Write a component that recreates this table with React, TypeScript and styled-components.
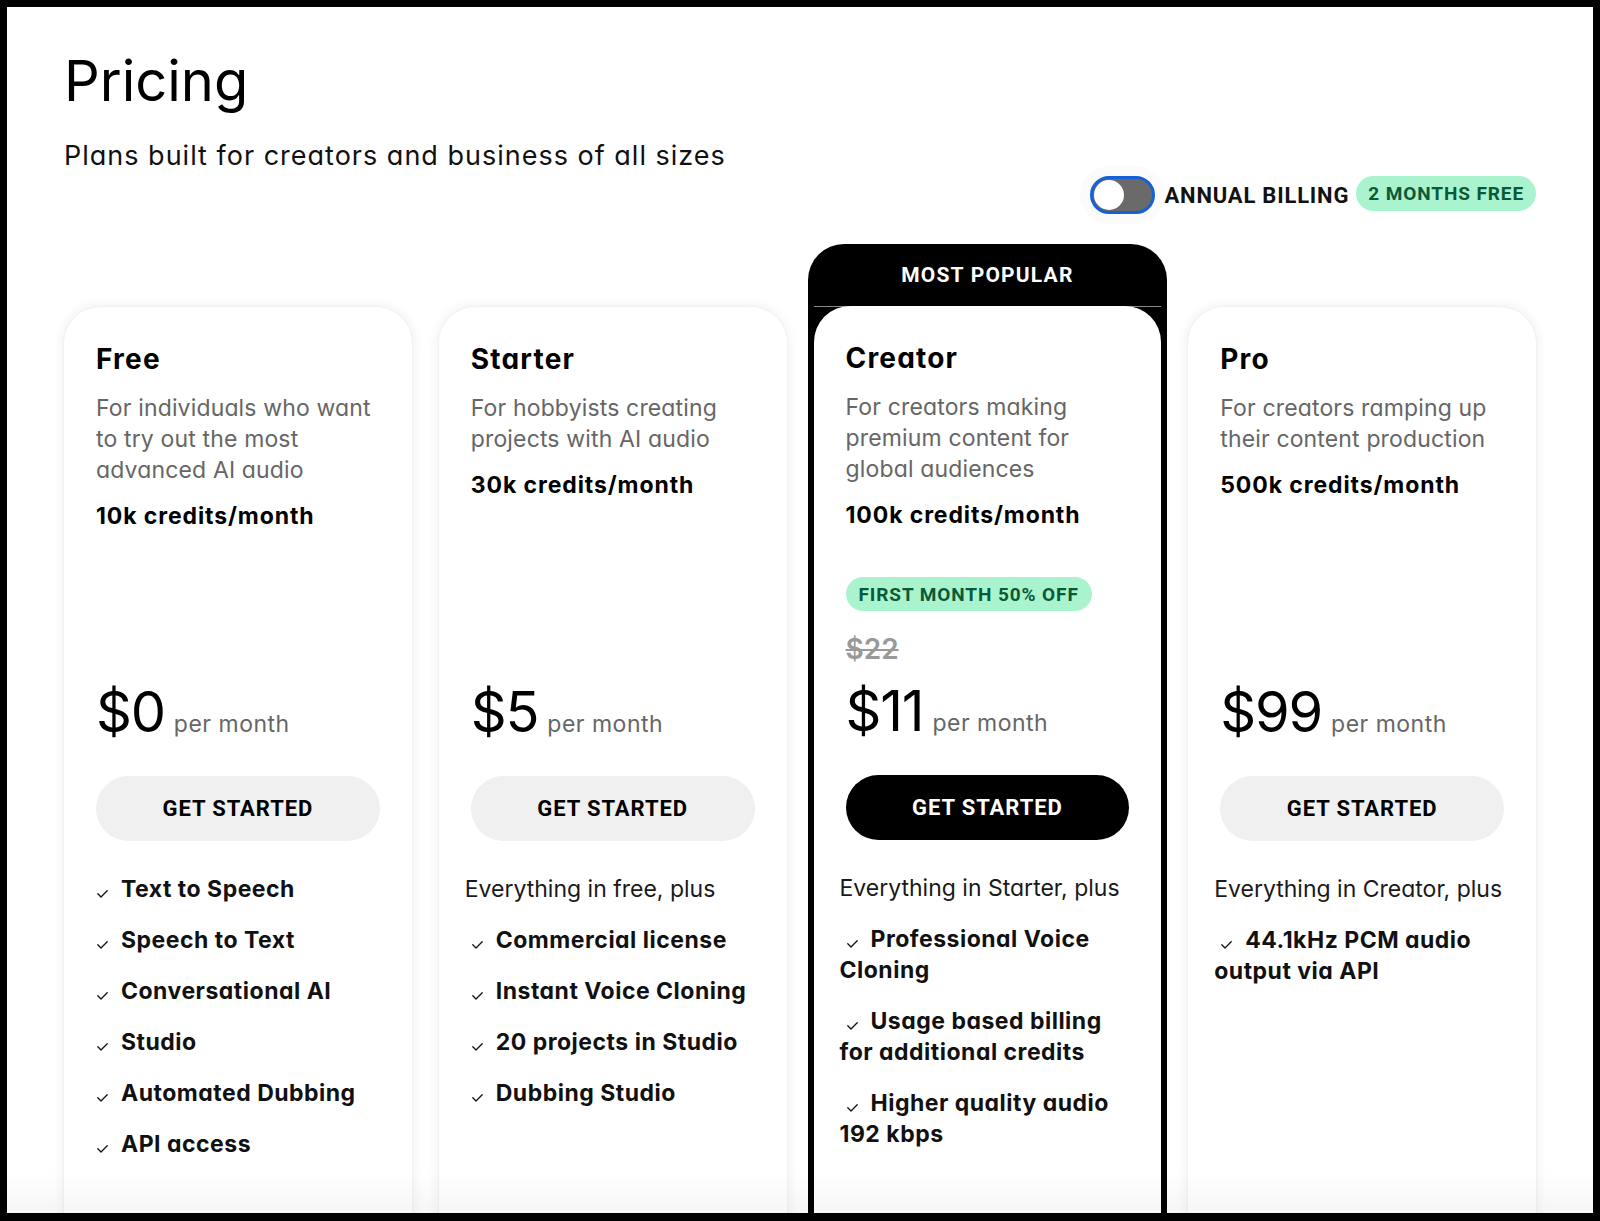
import React from 'react';
import styled, { createGlobalStyle } from 'styled-components';

const GlobalStyle = createGlobalStyle`
    html, body {
        margin: 0;
        padding: 0;
        background: #000;
    }

    body {
        font-family: Inter, "Noto Sans", sans-serif;
        font-feature-settings: "cv11" 1;
        color: #000;
        -webkit-font-smoothing: antialiased;
    }

    * {
        box-sizing: border-box;
    }
`;

const Frame = styled.div`
    position: relative;
    margin: 7px 7px 8px 7px;
    height: 1206px;
    background: #fff;
    overflow: hidden;
    padding: 46px 57px 0 57px;
`;

// soft grey fade at the bottom edge of the screenshot
const BottomFade = styled.div`
    position: absolute;
    left: 0;
    right: 0;
    bottom: 0;
    height: 42px;
    background: linear-gradient(rgba(0, 0, 0, 0), rgba(0, 0, 0, 0.035));
    pointer-events: none;
`;

const Title = styled.h1`
    margin: 0;
    font-size: 56px;
    line-height: 56px;
    font-weight: 400;
`;

const Subtitle = styled.p`
    margin: 30px 0 0 0;
    font-size: 27px;
    line-height: 34px;
    font-weight: 400;
    letter-spacing: 1px;
    color: #111;
`;

const ToggleRow = styled.div`
    display: flex;
    align-items: center;
    justify-content: flex-end;
    margin-top: 3px;
    height: 38px;
`;

const Toggle = styled.div`
    width: 65px;
    height: 38px;
    border-radius: 19px;
    border: 3px solid #1661d6;
    background: #6a6a6a;
    display: flex;
    align-items: center;
    padding: 0 0 0 1px;
    margin-right: 10px;
    box-shadow: 0 0 0 10px rgba(0, 0, 0, 0.015);
`;

const Knob = styled.div`
    width: 30px;
    height: 30px;
    border-radius: 50%;
    background: #fff;
`;

const Caps = styled.span`
    font-family: Roboto, "Liberation Sans", sans-serif;
    font-weight: 700;
    text-transform: uppercase;
`;

const BillingLabel = styled(Caps)`
    font-size: 22px;
    letter-spacing: 0.8px;
    color: #111;
    margin-right: 7px;
`;

const Pill = styled(Caps)<{ $inCard?: boolean }>`
    display: inline-flex;
    align-items: center;
    align-self: flex-start;
    height: ${({ $inCard }) => ($inCard ? 34 : 35)}px;
    padding: 0 ${({ $inCard }) => ($inCard ? 13 : 12)}px;
    border-radius: 18px;
    background: #a9f3cf;
    color: #0a5a37;
    font-size: 19px;
    letter-spacing: 0.9px;
`;

const Grid = styled.div`
    display: grid;
    grid-template-columns: repeat(4, 1fr);
    gap: 27px;
    margin-top: 30px;
    align-items: start;
`;

const Column = styled.div`
    padding-top: 63px;
`;

const PopularWrap = styled.div`
    margin: 0 -6px;
    padding: 0 6px;
    background: #000;
    border-radius: 36px 36px 0 0;
`;

const Banner = styled(Caps)`
    display: block;
    height: 63px;
    line-height: 63px;
    text-align: center;
    color: #fff;
    font-size: 21px;
    letter-spacing: 1.2px;
    border-bottom: 1px solid #8a8a8a;
`;

const Card = styled.div<{ $popular?: boolean }>`
    position: relative;
    background: #fff;
    border-radius: 36px 36px 0 0;
    min-height: 960px;
    margin-top: ${({ $popular }) => ($popular ? -1 : 0)}px;
    box-shadow: ${({ $popular }) =>
        $popular ? 'none' : '0 0 0 1px rgba(0,0,0,0.025), 0 0 10px 4px rgba(0,0,0,0.045)'};
`;

const CardTop = styled.div`
    height: 534px;
    padding: 36px 32px 0 32px;
    display: flex;
    flex-direction: column;
`;

const PlanName = styled.h2`
    margin: 0;
    font-size: 28px;
    line-height: 32px;
    font-weight: 700;
    letter-spacing: 1.2px;
`;

const PlanDesc = styled.p`
    margin: 18px 0 0 0;
    font-size: 23px;
    line-height: 31px;
    letter-spacing: 0.15px;
    color: #666;
`;

const Credits = styled.div`
    margin-top: 15px;
    font-size: 23px;
    line-height: 30px;
    font-weight: 700;
    letter-spacing: 0.9px;
`;

const PriceBlock = styled.div`
    margin-top: auto;
    display: flex;
    flex-direction: column;
`;

const OldPrice = styled.div`
    margin: 21px 0 17px 0;
    font-size: 28px;
    line-height: 34px;
    font-weight: 600;
    color: #999;
    text-decoration: line-through;
    text-decoration-thickness: 2px;
`;

const PriceRow = styled.div`
    display: flex;
    align-items: baseline;
    gap: 9px;
`;

const Amount = styled.span`
    font-size: 56px;
    line-height: 56px;
    font-weight: 400;
    letter-spacing: -1.2px;
`;

const Per = styled.span`
    font-size: 23px;
    letter-spacing: 0.5px;
    color: #666;
`;

const CtaButton = styled.button<{ $primary?: boolean }>`
    margin-top: 36px;
    height: 65px;
    width: 100%;
    border: none;
    border-radius: 33px;
    background: ${({ $primary }) => ($primary ? '#000' : '#f0f0f0')};
    color: ${({ $primary }) => ($primary ? '#fff' : '#000')};
    font-family: Roboto, "Liberation Sans", sans-serif;
    font-weight: 700;
    font-size: 22px;
    letter-spacing: 0.9px;
    cursor: pointer;
`;

const Features = styled.div`
    padding: 33px 32px 0 26px;
`;

const Lead = styled.div`
    font-size: 23px;
    line-height: 31px;
    color: #1a1a1a;
    margin-bottom: 20px;
`;

const FeatureItem = styled.div`
    font-size: 23px;
    line-height: 31px;
    font-weight: 700;
    letter-spacing: 0.5px;
    color: #111;
    margin-bottom: 20px;
`;

const CheckIcon = styled.svg`
    width: 11px;
    height: 8px;
    margin: 0 13px 0 7px;
    vertical-align: -1px;
`;

const Check = () => (
    <CheckIcon viewBox="0 0 11 8" fill="none">
        <path d="M0.8 3.8 L4 7 L10.2 0.8" stroke="#111" strokeWidth="1.3" strokeLinecap="round" strokeLinejoin="round" />
    </CheckIcon>
);

interface Plan {
    name: string;
    description: string;
    credits: string;
    price: string;
    oldPrice?: string;
    promo?: string;
    lead?: string;
    features: string[];
    popular?: boolean;
}

const plans: Plan[] = [
    {
        name: 'Free',
        description: 'For individuals who want to try out the most advanced AI audio',
        credits: '10k credits/month',
        price: '$0',
        features: ['Text to Speech', 'Speech to Text', 'Conversational AI', 'Studio', 'Automated Dubbing', 'API access'],
    },
    {
        name: 'Starter',
        description: 'For hobbyists creating projects with AI audio',
        credits: '30k credits/month',
        price: '$5',
        lead: 'Everything in free, plus',
        features: ['Commercial license', 'Instant Voice Cloning', '20 projects in Studio', 'Dubbing Studio'],
    },
    {
        name: 'Creator',
        description: 'For creators making premium content for global audiences',
        credits: '100k credits/month',
        price: '$11',
        oldPrice: '$22',
        promo: 'First month 50% off',
        lead: 'Everything in Starter, plus',
        features: ['Professional Voice Cloning', 'Usage based billing for additional credits', 'Higher quality audio 192 kbps'],
        popular: true,
    },
    {
        name: 'Pro',
        description: 'For creators ramping up their content production',
        credits: '500k credits/month',
        price: '$99',
        lead: 'Everything in Creator, plus',
        features: ['44.1kHz PCM audio output via API'],
    },
];

const PlanCard: React.FC<{ plan: Plan }> = ({ plan }) => (
    <Card $popular={plan.popular}>
        <CardTop>
            <PlanName>{plan.name}</PlanName>
            <PlanDesc>{plan.description}</PlanDesc>
            <Credits>{plan.credits}</Credits>
            <PriceBlock>
                {plan.promo && <Pill $inCard>{plan.promo}</Pill>}
                {plan.oldPrice && <OldPrice>{plan.oldPrice}</OldPrice>}
                <PriceRow>
                    <Amount>{plan.price}</Amount>
                    <Per>per month</Per>
                </PriceRow>
            </PriceBlock>
            <CtaButton $primary={plan.popular}>GET STARTED</CtaButton>
        </CardTop>
        <Features>
            {plan.lead && <Lead>{plan.lead}</Lead>}
            {plan.features.map((f) => (
                <FeatureItem key={f}>
                    <Check />
                    {f}
                </FeatureItem>
            ))}
        </Features>
    </Card>
);

const App: React.FC = () => (
    <>
        <GlobalStyle />
        <Frame>
            <Title>Pricing</Title>
            <Subtitle>Plans built for creators and business of all sizes</Subtitle>
            <ToggleRow>
                <Toggle>
                    <Knob />
                </Toggle>
                <BillingLabel>Annual billing</BillingLabel>
                <Pill>2 months free</Pill>
            </ToggleRow>
            <Grid>
                {plans.map((plan) =>
                    plan.popular ? (
                        <PopularWrap key={plan.name}>
                            <Banner>Most popular</Banner>
                            <PlanCard plan={plan} />
                        </PopularWrap>
                    ) : (
                        <Column key={plan.name}>
                            <PlanCard plan={plan} />
                        </Column>
                    ),
                )}
            </Grid>
            <BottomFade />
        </Frame>
    </>
);

export default App;
